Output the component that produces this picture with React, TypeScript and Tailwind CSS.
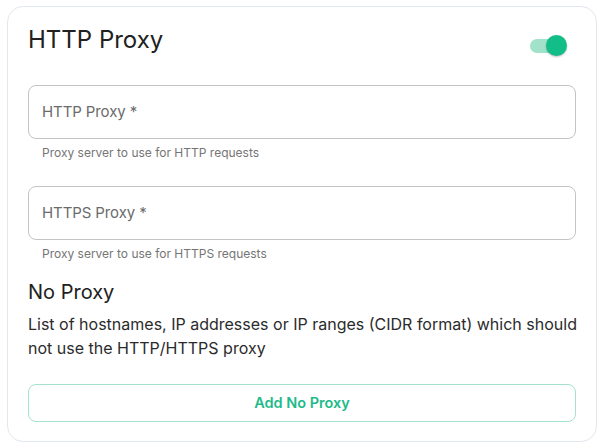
import { useState } from 'react';

function Field({ label, hint }: { label: string; hint: string }) {
    return (
        <div>
            <div className="flex h-[54px] items-center rounded-lg border border-[#c4c4c4] px-[13px]">
                <span className="text-[15px] tracking-[-0.1px] text-[#6b6b6b]">{label} *</span>
            </div>
            <p className="mt-[6px] px-[14px] text-xs leading-4 text-[#757575]">{hint}</p>
        </div>
    );
}

export default function App() {
    const [enabled, setEnabled] = useState(true);

    return (
        <div className="h-[448px] w-[604px] bg-white p-[6px_8px_6px_7px] font-['Inter',sans-serif] text-[#212121]">
            <div className="h-[436px] w-[590px] rounded-2xl border border-[#e3e7ee] px-5 pt-[17px]">
                <div className="flex items-start justify-between">
                    <h2 className="text-2xl leading-8 font-normal">HTTP Proxy</h2>
                    <button
                        onClick={() => setEnabled(!enabled)}
                        className="relative mt-[15px] mr-[13px] h-[14px] w-[33px] rounded-full bg-[#a3e2ca]"
                    >
                        <span className="absolute -top-[4px] -right-[4px] h-[21px] w-[21px] rounded-full bg-[#12bd88] shadow-[0_1px_2px_rgba(0,0,0,0.25)]" />
                    </button>
                </div>

                <div className="mt-[29px] flex flex-col gap-[25px]">
                    <Field label="HTTP Proxy" hint="Proxy server to use for HTTP requests" />
                    <Field label="HTTPS Proxy" hint="Proxy server to use for HTTPS requests" />
                </div>

                <h3 className="mt-[16px] text-xl leading-7 font-normal">No Proxy</h3>
                <p className="mt-[6px] -mr-3 text-base leading-6 text-[#2b2b2b]">
                    List of hostnames, IP addresses or IP ranges (CIDR format) which should not use the HTTP/HTTPS proxy
                </p>

                <button className="mt-[24px] flex h-[38px] w-full items-center justify-center rounded-lg border border-[#a5e3cd] text-[14.5px] font-semibold text-[#1dbb8a]">
                    Add No Proxy
                </button>
            </div>
        </div>
    );
}
